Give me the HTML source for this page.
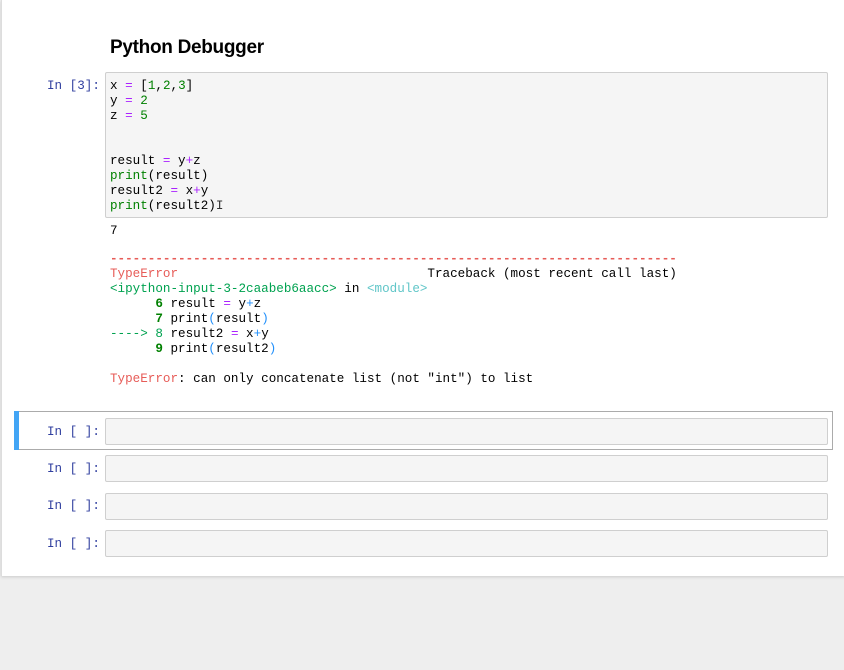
<!DOCTYPE html><html><head><style>
body{margin:0;width:844px;height:670px;background:#eeeeee;position:relative;overflow:hidden;font-family:"Liberation Mono",monospace;}
.page{position:absolute;left:1px;top:0;width:843px;height:576px;background:#fff;box-shadow:0 1px 3px rgba(0,0,0,.15);border-left:1px solid #ddd}
.a{position:absolute;font-size:12.6px;line-height:15px;white-space:pre;color:#000}
.p{color:#303f9f}
.box{position:absolute;left:105px;width:721px;background:#f5f5f5;border:1px solid #cfcfcf;border-radius:2px}
.o{color:#aa22ff}.g{color:#008000}.r{color:#e75c58}.gb{color:#00a250}.c{color:#60c6c8}.b{color:#208ffb}
h1{position:absolute;left:110px;top:37px;margin:0;font:bold 19px "Liberation Sans",sans-serif;letter-spacing:-0.3px}
</style></head><body><div class="page"></div>
<h1>Python Debugger</h1>
<div class="a p" style="left:47px;top:79px">In [3]:</div>
<div class="box" style="top:72px;height:144px"></div>
<div class="a" style="left:110px;top:79px">x <span class="o">=</span> [<span class="g">1</span>,<span class="g">2</span>,<span class="g">3</span>]
y <span class="o">=</span> <span class="g">2</span>
z <span class="o">=</span> <span class="g">5</span>


result <span class="o">=</span> y<span class="o">+</span>z
<span class="g">print</span>(result)
result2 <span class="o">=</span> x<span class="o">+</span>y
<span class="g">print</span>(result2)<span style="color:#333">I</span></div>
<div class="a" style="left:110px;top:224px">7</div>
<div class="a" style="left:110px;top:252px"><span class="r" style="font-weight:bold">---------------------------------------------------------------------------</span>
<span class="r">TypeError</span>                                 Traceback (most recent call last)
<span class="gb">&lt;ipython-input-3-2caabeb6aacc&gt;</span> in <span class="c">&lt;module&gt;</span>
<b class="g">      6</b> result <span class="o">=</span> y<span class="b">+</span>z
<b class="g">      7</b> print<span class="b">(</span>result<span class="b">)</span>
<span class="gb">----&gt; 8</span> result2 <span class="o">=</span> x<span class="b">+</span>y
<b class="g">      9</b> print<span class="b">(</span>result2<span class="b">)</span>

<span class="r">TypeError</span>: can only concatenate list (not "int") to list</div>
<div style="position:absolute;left:14px;top:411px;width:818px;height:37px;border:1px solid #ababab;border-left:none"></div>
<div style="position:absolute;left:14px;top:411px;width:5px;height:39px;background:#42a5f5"></div>
<div class="box" style="top:418px;height:25px"></div>
<div class="box" style="top:455px;height:25px"></div>
<div class="box" style="top:493px;height:25px"></div>
<div class="box" style="top:530px;height:25px"></div>
<div class="a p" style="left:47px;top:425px">In [ ]:</div>
<div class="a p" style="left:47px;top:462px">In [ ]:</div>
<div class="a p" style="left:47px;top:499px">In [ ]:</div>
<div class="a p" style="left:47px;top:537px">In [ ]:</div>
</body></html>
